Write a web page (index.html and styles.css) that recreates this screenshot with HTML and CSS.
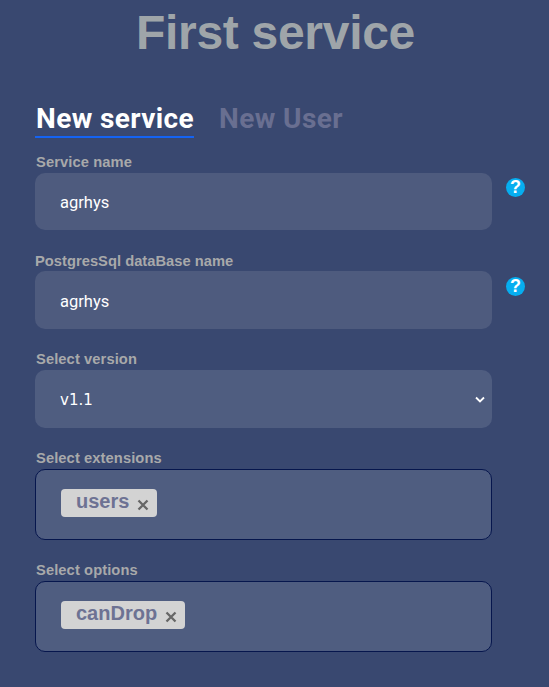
FILE: index.html
```
<!DOCTYPE html>
<html lang="en">
<head>
<meta charset="utf-8">
<title>First service</title>
<link rel="stylesheet" href="styles.css">
</head>
<body>
<h1>First service</h1>
<main>
  <nav class="tabs"><a class="tab active">New service</a><a class="tab">New User</a></nav>
  <section class="group first">
    <label>Service name</label>
    <div class="row"><div class="field">agrhys</div><span class="help">?</span></div>
  </section>
  <section class="group second">
    <label class="database">PostgresSql dataBase name</label>
    <div class="row"><div class="field">agrhys</div><span class="help">?</span></div>
  </section>
  <section class="group">
    <label>Select version</label>
    <div class="field select"><span class="version">v1.1</span><svg width="10" height="8" viewBox="0 0 10 8"><path d="M1 1.5 5 5.5 9 1.5"/></svg></div>
  </section>
  <section class="group tall">
    <label>Select extensions</label>
    <div class="field multi"><span class="chip">users<svg width="12" height="12" viewBox="0 0 12 12"><path d="M1.5 1.5 10.5 10.5M10.5 1.5 1.5 10.5"/></svg></span></div>
  </section>
  <section class="group tall">
    <label>Select options</label>
    <div class="field multi"><span class="chip">canDrop<svg width="12" height="12" viewBox="0 0 12 12"><path d="M1.5 1.5 10.5 10.5M10.5 1.5 1.5 10.5"/></svg></span></div>
  </section>
</main>
</body>
</html>
```
FILE: styles.css
```
* { box-sizing: border-box; }
body { margin: 0; height: 687px; overflow: hidden; background: #394870; font-family: "Liberation Sans", Arial, sans-serif; }
h1 { margin: 0; height: 103px; padding: 5px 0 0 2px; text-align: center; font-size: 48px; line-height: 55px; letter-spacing: -.3px; color: #9fa5a9; }
main { padding-left: 35px; }
.tabs { display: flex; gap: 24px; height: 49px; align-items: flex-start; }
.tab { height: 35px; padding-left: 1px; line-height: 31px; font-family: Roboto, sans-serif; font-weight: 700; font-size: 28px; letter-spacing: .4px; color: #696f91; border-bottom: 2px solid transparent; white-space: nowrap; }
.tab.active { color: #fff; border-color: #1463f3; }
.group { height: 99px; }
.group.tall { height: 112px; }
label { display: block; height: 21px; padding-left: 1px; line-height: 20px; font-size: 14.7px; font-weight: 700; letter-spacing: .1px; color: #a8a9aa; }
.database { height: 20px; padding-left: 0; letter-spacing: .03px; }
.row { display: flex; gap: 14px; }
.field { width: 457px; height: 58px; padding-left: 25px; border-radius: 10px; background: #4f5d80; color: #fff; font-family: Roboto, sans-serif; font-size: 16.5px; line-height: 61px; }
.first .field { height: 57px; line-height: 60px; }
.group.second { height: 98px; }
.second .help { margin-top: 6px; }
.row .field { background: #4e5b7e; }
.help { width: 19px; height: 19px; margin-top: 5px; border-radius: 50%; background: #06aef0; color: #fff; font-family: "Liberation Sans", sans-serif; font-size: 18px; font-weight: 700; line-height: 19px; text-align: center; }
.select { display: flex; align-items: center; justify-content: space-between; padding: 2px 7px 0 25px; }
.version { font-family: "DejaVu Sans", sans-serif; font-size: 15px; }
svg { fill: none; stroke: #fff; stroke-width: 1.8; }
.multi { height: 71px; border: 1px solid #06164d; padding: 19px 0 0 25px; line-height: 0; }
.chip { display: inline-flex; align-items: center; height: 28px; padding: 0 8px 4px 15px; border-radius: 4px; background: #d3d3d3; color: #6d7293; font-family: "Liberation Sans", Arial, sans-serif; font-size: 20px; font-weight: 700; line-height: 25px; }
.chip svg { margin: 8px 0 0 8px; stroke: #666; stroke-width: 2.3; }
```
